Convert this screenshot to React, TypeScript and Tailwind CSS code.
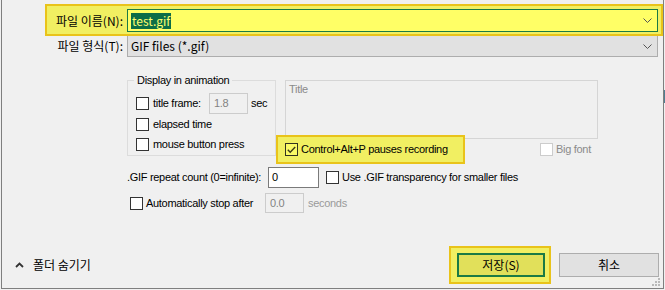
import React from 'react';

const ko = "font-['Noto_Sans_CJK_KR','Liberation_Sans',sans-serif]";
const en = "font-['Liberation_Sans',Arial,sans-serif] text-[11px] leading-[13px] tracking-[-0.3px]";

interface BoxProps {
  checked?: boolean;
  disabled?: boolean;
  yellow?: boolean;
}

const Box = ({ checked, disabled, yellow }: BoxProps) => (
  <span
    className={
      'flex w-[13px] h-[13px] shrink-0 items-center justify-center border ' +
      (disabled ? 'border-[#cccccc] bg-white' : yellow ? 'border-[#333320] bg-[#fafa66]' : 'border-[#333333] bg-white')
    }
  >
    {checked && (
      <svg width="9" height="8" viewBox="0 0 9 8">
        <polyline points="0.8,3.8 3.2,6.2 8.2,1" fill="none" stroke="#3a3a18" strokeWidth="1.4" />
      </svg>
    )}
  </span>
);

const Chevron = () => (
  <svg width="9" height="5" viewBox="0 0 9 5" className="ml-auto mr-[5px]">
    <polyline points="0.5,0.5 4.5,4.5 8.5,0.5" fill="none" stroke="#555555" strokeWidth="1" />
  </svg>
);

const App = () => {
  return (
    <div className="relative h-[290px] w-[665px] overflow-hidden bg-[#f0f0f0] text-black">
      {/* bit of whatever window lies behind */}
      <div className="absolute left-[664px] top-[90px] h-[13px] w-[1px] bg-[#4f7f92]" />

      <div className="relative ml-[1px] flex h-[289px] w-[663px] flex-col border-b border-l border-r border-[#7f7f7f]">
        {/* 파일 이름 */}
        <div className="relative mt-[9px] flex h-[23px] items-center">
          <div className="absolute left-[43px] top-[-5px] h-[32px] w-[618px] border-2 border-[#e9c31a] bg-[#f1ef62]" />
          <span className={`relative w-[121px] text-right text-[12px] leading-[16px] ${ko}`}>파일 이름(N):</span>
          <div className="relative ml-[4px] flex h-[23px] w-[531px] items-center border border-[#1b7a44] bg-[#ffff66] pl-[3px]">
            <span className={`bg-[#0d6d47] px-[1px] text-[12px] leading-[16px] text-[#ffff70] ${ko}`}>test.gif</span>
            <Chevron />
          </div>
        </div>

        {/* 파일 형식 */}
        <div className="mt-[3px] flex h-[22px] items-center">
          <span className={`w-[121px] text-right text-[12px] leading-[16px] ${ko}`}>파일 형식(T):</span>
          <div className="ml-[4px] flex h-[22px] w-[531px] items-center border border-[#adadad] bg-[#e1e1e1] pl-[3px]">
            <span className={`text-[12px] leading-[16px] ${ko}`}>GIF files (*.gif)</span>
            <Chevron />
          </div>
        </div>

        {/* options */}
        <div className={`mt-[23px] flex pl-[125px] ${en}`}>
          <div className="relative h-[76px] w-[149px] border border-[#dcdcdc] pt-[12px]">
            <span className="absolute left-[6px] top-[-7px] bg-[#f0f0f0] px-[3px]">Display in animation</span>
            <div className="flex h-[21px] items-center pl-[8px]">
              <div className="flex w-[73px] items-center">
                <Box />
                <span className="ml-[4px]">title frame:</span>
              </div>
              <div className="flex h-[21px] w-[39px] items-center border border-[#cccccc] pl-[4px] text-[#838383]">1.8</div>
              <span className="ml-[3px]">sec</span>
            </div>
            <div className="flex h-[20px] items-center pl-[8px]">
              <Box />
              <span className="ml-[4px]">elapsed time</span>
            </div>
            <div className="flex h-[20px] items-center pl-[8px]">
              <Box />
              <span className="ml-[4px]">mouse button press</span>
            </div>
          </div>

          <div className="ml-[9px] w-[313px]">
            <div className="h-[59px] border border-[#d5d5d5] pl-[3px] pt-[2px] text-[#8a8a8a]">Title</div>
            <div className="mt-[4px] flex h-[13px] items-center">
              <div className="relative flex w-[255px] items-center">
                <div className="absolute left-[-9px] top-[-8px] h-[29px] w-[189px] border-2 border-[#e9c31a] bg-[#f1ef62]" />
                <span className="relative flex items-center">
                  <Box checked yellow />
                  <span className="ml-[3px]">Control+Alt+P pauses recording</span>
                </span>
              </div>
              <Box disabled />
              <span className="ml-[3px] text-[#8a8a8a]">Big font</span>
            </div>
          </div>
        </div>

        <div className={`mt-[11px] flex h-[21px] items-center pl-[125px] ${en}`}>
          <span className="w-[141px]">.GIF repeat count (0=infinite):</span>
          <div className="flex h-[21px] w-[51px] items-center border border-[#7a7a7a] bg-white pl-[3px]">0</div>
          <span className="ml-[7px]">
            <Box />
          </span>
          <span className="ml-[3px]">Use .GIF transparency for smaller files</span>
        </div>

        <div className={`mt-[5px] flex h-[20px] items-center pl-[128px] ${en}`}>
          <div className="flex w-[135px] items-center">
            <Box />
            <span className="ml-[3px]">Automatically stop after</span>
          </div>
          <div className="flex h-[20px] w-[39px] items-center border border-[#cccccc] pl-[4px] text-[#838383]">0.0</div>
          <span className="ml-[4px] text-[#9a9a9a]">seconds</span>
        </div>

        {/* footer */}
        <div className={`mt-auto mb-[11px] flex h-[24px] items-center text-[12px] leading-[16px] ${ko}`}>
          <svg width="9" height="6" viewBox="0 0 9 6" className="ml-[13px]">
            <polyline points="1,5 4.5,1.5 8,5" fill="none" stroke="#333333" strokeWidth="1.8" />
          </svg>
          <span className="ml-[9px]">폴더 숨기기</span>

          <div className="relative ml-auto">
            <div className="absolute left-[-8px] top-[-7px] h-[38px] w-[102px] border-2 border-[#e9c31a] bg-[#f1ef62]" />
            <button className="relative flex h-[24px] w-[88px] items-center justify-center border-2 border-[#1b7a44] bg-[#e1e05a]">
              저장(S)
            </button>
          </div>
          <button className="ml-[14px] mr-[4px] flex h-[24px] w-[100px] items-center justify-center border border-[#adadad] bg-[#e1e1e1]">
            취소
          </button>
        </div>

        {/* size grip */}
        <svg width="9" height="9" viewBox="0 0 9 9" className="absolute bottom-[1px] right-[2px]">
          <rect x="6" y="0" width="2" height="2" fill="#b9b9b9" />
          <rect x="3" y="3" width="2" height="2" fill="#b9b9b9" />
          <rect x="6" y="3" width="2" height="2" fill="#b9b9b9" />
          <rect x="0" y="6" width="2" height="2" fill="#b9b9b9" />
          <rect x="3" y="6" width="2" height="2" fill="#b9b9b9" />
          <rect x="6" y="6" width="2" height="2" fill="#b9b9b9" />
        </svg>
      </div>
    </div>
  );
};

export default App;
